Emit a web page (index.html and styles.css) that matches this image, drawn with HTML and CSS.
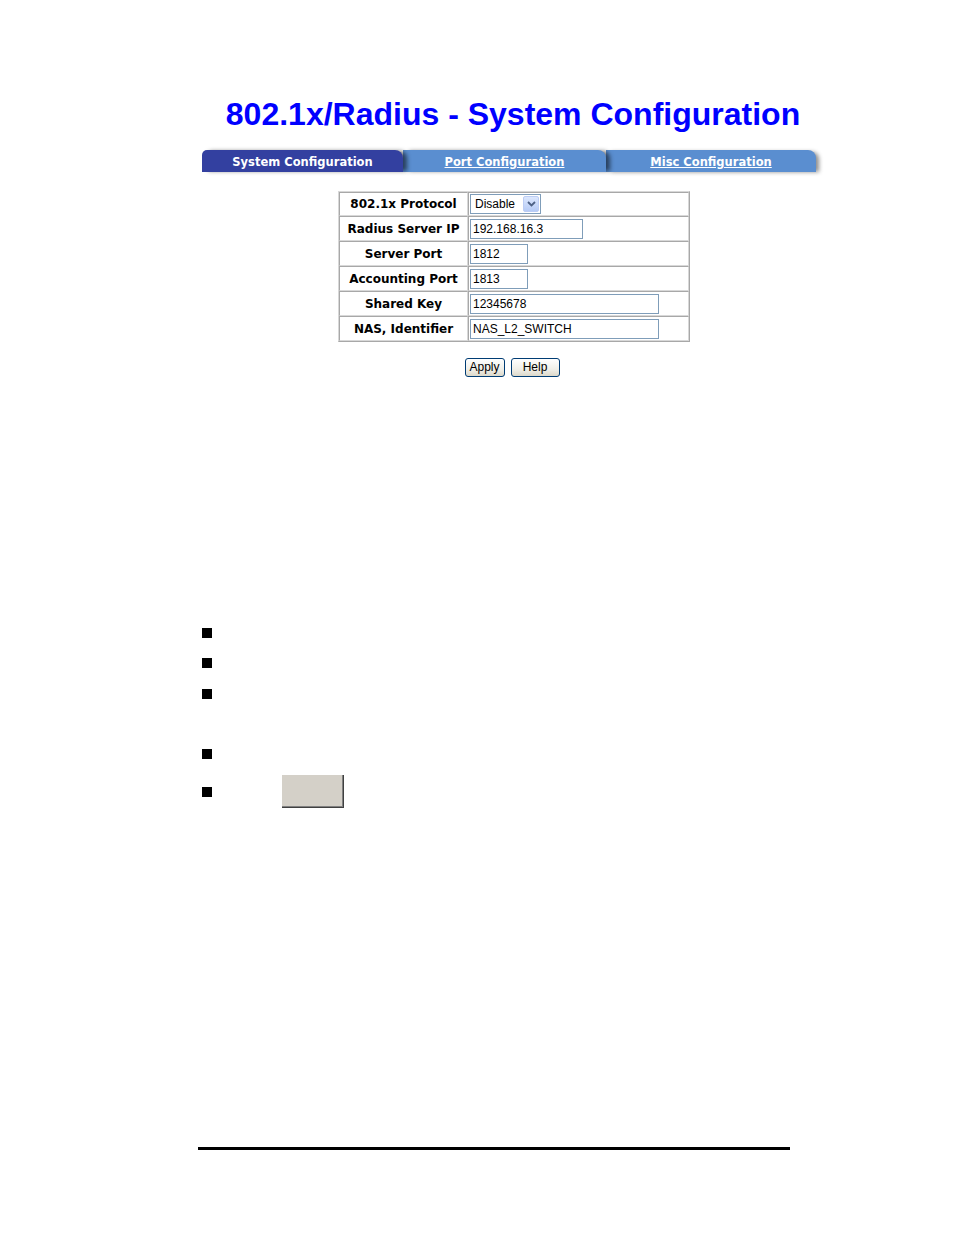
FILE: index.html
```html
<!DOCTYPE html>
<html>
<head>
<meta charset="utf-8">
<link rel="stylesheet" href="styles.css">
</head>
<body>
<div class="content">
  <h1 class="title">802.1x/Radius - System Configuration</h1>
  <div class="tabs">
    <div class="tab tab-active">System Configuration</div>
    <div class="tab tab-port"><a href="#">Port Configuration</a></div>
    <div class="tab tab-misc"><a href="#">Misc Configuration</a></div>
  </div>
  <table class="cfg">
    <tr class="first">
      <td class="lbl">802.1x Protocol</td>
      <td class="val">
        <div class="select">
          <span class="sel-text">Disable</span>
          <span class="sel-btn"><svg width="9" height="6" viewBox="0 0 9 6"><path d="M1 1 L4.5 4.5 L8 1" fill="none" stroke="#4d6185" stroke-width="1.8"/></svg></span>
        </div>
      </td>
    </tr>
    <tr>
      <td class="lbl">Radius Server IP</td>
      <td class="val"><div class="input w-ip">192.168.16.3</div></td>
    </tr>
    <tr>
      <td class="lbl">Server Port</td>
      <td class="val"><div class="input w-port">1812</div></td>
    </tr>
    <tr>
      <td class="lbl">Accounting Port</td>
      <td class="val"><div class="input w-port">1813</div></td>
    </tr>
    <tr>
      <td class="lbl">Shared Key</td>
      <td class="val"><div class="input w-long">12345678</div></td>
    </tr>
    <tr>
      <td class="lbl">NAS, Identifier</td>
      <td class="val"><div class="input w-long">NAS_L2_SWITCH</div></td>
    </tr>
  </table>
  <div class="buttons">
    <button class="btn btn-apply">Apply</button>
    <button class="btn btn-help">Help</button>
  </div>
  <div class="bullets">
    <div class="brow r1"><span class="sq"></span></div>
    <div class="brow r2"><span class="sq"></span></div>
    <div class="brow r3"><span class="sq"></span></div>
    <div class="brow r4"><span class="sq"></span></div>
    <div class="brow r5"><span class="sq"></span><span class="greybox"></span></div>
  </div>
</div>
<div class="rule"></div>
</body>
</html>
```
FILE: styles.css
```css
html, body {
  margin: 0;
  padding: 0;
  background: #ffffff;
}
body {
  width: 954px;
  height: 1235px;
  overflow: hidden;
  font-family: "DejaVu Sans", Verdana, sans-serif;
}
.content {
  margin-left: 202px;
  width: 622px;
  display: flex;
  flex-direction: column;
}
.title {
  margin: 96px 0 0 0;
  font-family: "Liberation Sans", Arial, sans-serif;
  font-weight: bold;
  font-size: 32px;
  line-height: 36px;
  color: #0000ff;
  text-align: center;
  white-space: nowrap;
}
.tabs {
  margin-top: 18px;
  display: flex;
  height: 22px;
}
.tab {
  box-sizing: border-box;
  height: 22px;
  padding-top: 1px;
  display: flex;
  align-items: center;
  justify-content: center;
  border-top-right-radius: 8px;
  position: relative;
  font-weight: bold;
  font-size: 11.5px;
  color: #ffffff;
  box-shadow: 5px 0 4px -1px rgba(0, 0, 0, 0.55);
}
.tab a {
  color: #ffffff;
  text-decoration: underline;
}
.tab-active {
  width: 201px;
  background: #3340a0;
  border-top-left-radius: 5px;
  z-index: 3;
}
.tab-port {
  width: 203px;
  background: #5a8ed0;
  z-index: 2;
}
.tab-misc {
  width: 210px;
  background: #5a8ed0;
  z-index: 1;
  box-shadow: 4px 1px 4px -1px rgba(0, 0, 0, 0.45);
}
.cfg {
  margin: 19px 0 0 136px;
  border-collapse: separate;
  border-spacing: 0;
  border: 1px solid;
  border-color: #d8d8d8 #a8a8a8 #a8a8a8 #d8d8d8;
  width: 352px;
}
.cfg td {
  height: 25px;
  box-sizing: border-box;
  border: 1px solid;
  border-color: #a8a8a8 #d8d8d8 #d8d8d8 #a8a8a8;
  padding: 0;
}
.cfg .first td {
  height: 24px;
}
.lbl {
  width: 129px;
  text-align: center;
  font-weight: bold;
  font-size: 12px;
  color: #000000;
  white-space: nowrap;
}
.val {
  padding-left: 1px !important;
}
.input {
  box-sizing: border-box;
  height: 20px;
  border: 1px solid #7f9db9;
  background: #ffffff;
  font-family: "Liberation Sans", Arial, sans-serif;
  font-size: 12px;
  line-height: 18px;
  padding-left: 2px;
  color: #000000;
  white-space: nowrap;
}
.w-ip { width: 113px; }
.w-port { width: 58px; }
.w-long { width: 189px; }
.select {
  box-sizing: border-box;
  width: 71px;
  height: 20px;
  border: 1px solid #7f9db9;
  background: #ffffff;
  display: flex;
  align-items: center;
  justify-content: space-between;
  padding: 0 1px 0 4px;
  font-family: "Liberation Sans", Arial, sans-serif;
  font-size: 12px;
  color: #000000;
}
.sel-btn {
  box-sizing: border-box;
  width: 16px;
  height: 16px;
  border: 1px solid #bccdf5;
  border-radius: 2px;
  background: linear-gradient(#dce7fd, #b6cbf6);
  display: flex;
  align-items: center;
  justify-content: center;
}
.buttons {
  margin-top: 16px;
  display: flex;
  justify-content: center;
  gap: 6px;
  padding-right: 2px;
}
.btn {
  box-sizing: border-box;
  height: 19px;
  padding: 0;
  border: 1px solid #003c74;
  border-radius: 3px;
  background: linear-gradient(#ffffff, #f0efe8 60%, #dcd8ca);
  font-family: "Liberation Sans", Arial, sans-serif;
  font-size: 12px;
  color: #000000;
  line-height: 17px;
}
.btn-apply { width: 40px; }
.btn-help { width: 49px; }
.bullets {
  margin-top: 251px;
  display: flex;
  flex-direction: column;
}
.brow {
  display: flex;
  align-items: center;
  height: 10px;
}
.sq {
  width: 10px;
  height: 10px;
  background: #000000;
  flex: none;
}
.r2 { margin-top: 20px; }
.r3 { margin-top: 21px; }
.r4 { margin-top: 50px; }
.r5 { margin-top: 16px; height: 33px; }
.greybox {
  box-sizing: border-box;
  margin-left: 70px;
  width: 62px;
  height: 33px;
  background: #d4d0c8;
  border-right: 1px solid #404040;
  border-bottom: 1px solid #404040;
  box-shadow: inset -1px -1px 0 #808080;
}
.rule {
  margin: 339px 0 0 198px;
  width: 592px;
  height: 3px;
  background: #000000;
}
```
